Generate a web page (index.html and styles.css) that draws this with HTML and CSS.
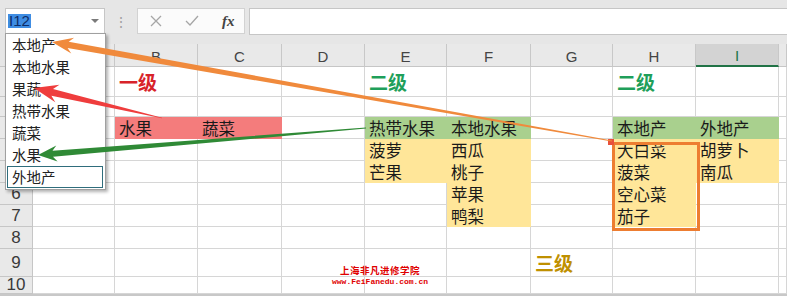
FILE: index.html
```html
<!DOCTYPE html>
<html lang="zh-CN">
<head>
  <meta charset="UTF-8">
  <meta name="viewport" content="width=device-width, initial-scale=1.0">
  <title>多级下拉菜单</title>
  <link rel="stylesheet" href="styles.css">
</head>
<body>
  <div class="app">
    <div class="toolbar">
      <div class="namebox"><span class="ref">I12</span><span class="caret"></span></div>
      <div class="sep">⋮</div>
      <div class="fbtns">
        <svg class="fb-icon" width="12" height="12" viewBox="0 0 12 12"><path d="M1 1 L11 11 M11 1 L1 11" stroke="#a6a6a6" stroke-width="1.3" fill="none"/></svg>
        <svg class="fb-icon" width="14" height="12" viewBox="0 0 14 12"><path d="M1 6 L5 10 L13 1" stroke="#a6a6a6" stroke-width="1.3" fill="none"/></svg>
        <span class="fb-fx">fx</span>
      </div>
      <div class="finput"></div>
    </div>

    <div class="sheet" id="sheet"></div>
    <div class="bottom-bar"></div>

    <ul class="dropdown">
      <li>本地产</li>
      <li>本地水果</li>
      <li>果蔬</li>
      <li>热带水果</li>
      <li>蔬菜</li>
      <li>水果</li>
      <li class="current">外地产</li>
    </ul>

    <div class="sel-box"></div>
    <div class="sel-handle"></div>

    <div class="watermark">
      <div class="wm-name">上海非凡进修学院</div>
      <div class="wm-url">www.FeiFanedu.com.cn</div>
    </div>

    <svg class="arrows" id="arrows" width="787" height="296"></svg>
  </div>

  <script>
    const letters = ['', 'A', 'B', 'C', 'D', 'E', 'F', 'G', 'H', 'I', ''];
    const data = {
      B1: ['一级', 'lv1'], E1: ['二级', 'lv2'], H1: ['二级', 'lv2'],
      B3: ['水果', 'pink'], C3: ['蔬菜', 'pink'],
      E3: ['热带水果', 'green'], F3: ['本地水果', 'green'], H3: ['本地产', 'green'], I3: ['外地产', 'green'],
      E4: ['菠萝', 'yellow'], F4: ['西瓜', 'yellow'], H4: ['大白菜', 'yellow'], I4: ['胡萝卜', 'yellow'],
      E5: ['芒果', 'yellow'], F5: ['桃子', 'yellow'], H5: ['菠菜', 'yellow'], I5: ['南瓜', 'yellow'],
      F6: ['苹果', 'yellow'], H6: ['空心菜', 'yellow'],
      F7: ['鸭梨', 'yellow'], H7: ['茄子', 'yellow'],
      G9: ['三级', 'lv3']
    };

    const sheet = document.getElementById('sheet');
    for (let r = 0; r <= 10; r++) {
      for (let c = 0; c <= 10; c++) {
        const el = document.createElement('div');
        if (r === 0 && c === 0) {
          el.className = 'corner';
        } else if (r === 0) {
          el.className = 'col-head' + (letters[c] === 'I' ? ' active' : '');
          el.textContent = letters[c];
        } else if (c === 0) {
          el.className = 'row-head';
          // 1-5 行号被下拉列表挡住
          if (r > 5) el.textContent = r;
        } else {
          const cell = data[letters[c] + r];
          el.className = 'cell' + (cell ? ' ' + cell[1] : '');
          if (cell) el.textContent = cell[0];
        }
        sheet.appendChild(el);
      }
    }

    // 箭头：尖端 -> 尾部，逐渐变细
    const svg = document.getElementById('arrows');
    function arrow(tip, tail, L, W, w0, w1, color) {
      const dx = tail[0] - tip[0], dy = tail[1] - tip[1];
      const len = Math.hypot(dx, dy);
      const ux = dx / len, uy = dy / len, nx = -uy, ny = ux;
      const p = (b, a, s) => [b[0] + ux * a + nx * s, b[1] + uy * a + ny * s];
      const pts = [tip, p(tip, L, W / 2), p(tip, L * 0.78, w0 / 2), p(tail, 0, w1 / 2),
                   p(tail, 0, -w1 / 2), p(tip, L * 0.78, -w0 / 2), p(tip, L, -W / 2)];
      const poly = document.createElementNS('http://www.w3.org/2000/svg', 'polygon');
      poly.setAttribute('points', pts.map(q => q[0].toFixed(1) + ',' + q[1].toFixed(1)).join(' '));
      poly.setAttribute('fill', color);
      svg.appendChild(poly);
    }
    arrow([52, 42], [612, 141], 21, 16, 6.5, 1, '#f08a3c');
    arrow([34, 88], [162, 118], 24, 18, 7, 0.5, '#ef3d3d');
    arrow([38, 155], [366, 128], 19, 16, 6, 1, '#2f8a36');
  </script>
</body>
</html>
```

FILE: styles.css
```css
body { margin: 0; background: #e6e6e6; font-family: "Noto Sans CJK SC", sans-serif; }
.app { position: relative; width: 787px; height: 296px; overflow: hidden; }

.toolbar { height: 44px; box-sizing: border-box; padding: 8px 0 0 5px; display: flex; align-items: flex-start; background: #e6e6e6; }
.namebox { width: 100px; height: 26px; box-sizing: border-box; border: 1px solid #c6c6c6; background: #fff; display: flex; align-items: center; justify-content: space-between; padding: 0 5px 0 2px; }
.ref { font-family: "Liberation Sans", sans-serif; font-size: 15px; line-height: 14px; background: #3f8de3; color: #0d2c66; padding: 0 1px; }
.caret { width: 0; height: 0; border-left: 4px solid transparent; border-right: 4px solid transparent; border-top: 4px solid #7a7a7a; }
.sep { width: 32px; text-align: center; color: #a0a0a0; font-size: 14px; line-height: 26px; }
.fbtns { width: 108px; height: 26px; box-sizing: border-box; border: 1px solid #d2d2d2; background: #fbfbfb; display: flex; align-items: center; gap: 23px; padding-left: 12px; margin-right: 4px; }
.fb-fx { font-family: "Liberation Serif", serif; font-style: italic; font-weight: bold; font-size: 15px; color: #444; }
.finput { flex: 1; height: 27px; box-sizing: border-box; border: 1px solid #c6c6c6; border-right: none; background: #fff; }

.sheet { display: grid; grid-template-columns: 33px 82px 83px 84px 83px 82px 84px 82px 83px 83px 8px; grid-template-rows: 23px 30px 20px repeat(6, 22px) 28px 17px; background: #fff; }
.corner { background: #e6e6e6; border-right: 1px solid #c6c6c6; border-bottom: 1px solid #c6c6c6; }
.col-head { background: #e9e9e9; border-right: 1px solid #c8c8c8; border-bottom: 1px solid #c6c6c6; box-sizing: border-box; display: flex; align-items: center; justify-content: center; font-family: "Liberation Sans", sans-serif; font-size: 15px; color: #444; padding-top: 2px; }
.col-head.active { background: #d3d3d3; color: #217346; border-bottom: 2px solid #217346; }
.row-head { background: #e9e9e9; border-right: 1px solid #c6c6c6; border-bottom: 1px solid #c6c6c6; box-sizing: border-box; display: flex; align-items: center; justify-content: center; font-family: "Liberation Sans", sans-serif; font-size: 17px; color: #3a3a3a; }
.cell { box-sizing: border-box; border-right: 1px solid #d6d6d6; border-bottom: 1px solid #d6d6d6; display: flex; align-items: center; padding-left: 4px; font-size: 16.5px; color: #1a1a1a; white-space: nowrap; }
.cell.pink { background: #f47c7c; border-color: #f47c7c; }
.cell.green { background: #a9d08e; border-color: #a9d08e; }
.cell.yellow { background: #ffe699; border-color: #ffe699; }
.cell.lv1, .cell.lv2, .cell.lv3 { font-size: 19px; font-weight: bold; }
.cell.lv1 { color: #d8232a; }
.cell.lv2 { color: #1f9f5a; }
.cell.lv3 { color: #bf9000; }
.bottom-bar { height: 2px; background: #c8c8c8; }

.dropdown { position: absolute; left: 5px; top: 33px; width: 101px; height: 157px; box-sizing: border-box; margin: 0; padding: 0; list-style: none; background: #fff; border: 1px solid #a0a0a0; box-shadow: 2px 2px 3px rgba(0, 0, 0, 0.3); }
.dropdown li { height: 22px; line-height: 22px; padding-left: 6px; font-size: 14.5px; color: #222; }
.dropdown li.current { margin: 0 2px 0 1px; padding-left: 4px; border: 1px solid #2f6d7c; height: 22px; line-height: 20px; box-sizing: border-box; }

.sel-box { position: absolute; left: 612px; top: 142px; width: 88px; height: 89px; box-sizing: border-box; border: 3px solid #ed7d31; }
.sel-handle { position: absolute; left: 608px; top: 139px; width: 6px; height: 6px; background: #e8513c; }

.watermark { position: absolute; left: 320px; top: 265px; width: 120px; text-align: center; color: #e00000; line-height: 11px; }
.wm-name { font-size: 9.5px; font-weight: bold; letter-spacing: 0.5px; }
.wm-url { font-family: "Liberation Mono", monospace; font-size: 8px; font-weight: bold; }

.arrows { position: absolute; left: 0; top: 0; pointer-events: none; }
```
